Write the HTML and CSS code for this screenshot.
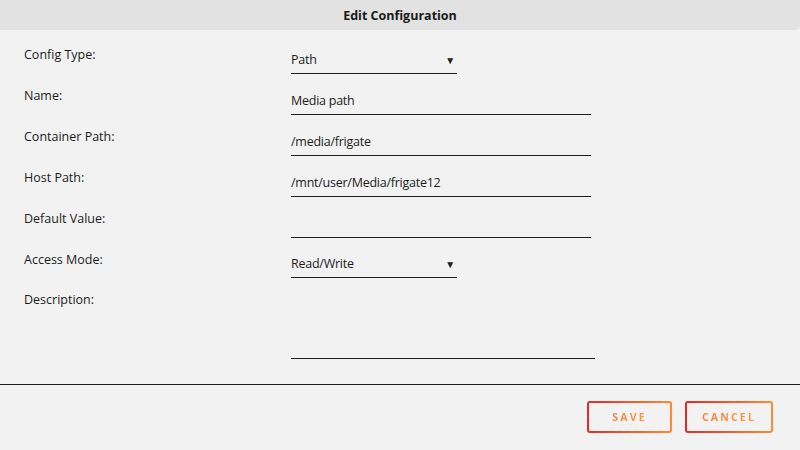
FILE: index.html
```html
<!DOCTYPE html>
<html lang="en">
<head>
<meta charset="utf-8">
<title>Edit Configuration</title>
<link rel="stylesheet" href="styles.css">
</head>
<body>
<div class="dialog">
  <header class="dialog-title">Edit Configuration</header>
  <form class="config-form">
    <div class="row">
      <label class="label">Config Type:</label>
      <div class="field select"><span class="value">Path</span><span class="caret">&#9660;</span></div>
    </div>
    <div class="row">
      <label class="label">Name:</label>
      <div class="field text"><span class="value">Media path</span></div>
    </div>
    <div class="row">
      <label class="label">Container Path:</label>
      <div class="field text"><span class="value">/media/frigate</span></div>
    </div>
    <div class="row">
      <label class="label">Host Path:</label>
      <div class="field text"><span class="value">/mnt/user/Media/frigate12</span></div>
    </div>
    <div class="row">
      <label class="label">Default Value:</label>
      <div class="field text"><span class="value"></span></div>
    </div>
    <div class="row row-short">
      <label class="label">Access Mode:</label>
      <div class="field select"><span class="value">Read/Write</span><span class="caret">&#9660;</span></div>
    </div>
    <div class="row row-desc">
      <label class="label">Description:</label>
      <div class="field area"></div>
    </div>
  </form>
  <footer class="actions">
    <button class="btn btn-save" type="button"><span>SAVE</span></button>
    <button class="btn btn-cancel" type="button"><span>CANCEL</span></button>
  </footer>
</div>
</body>
</html>
```
FILE: styles.css
```css
html, body {
  margin: 0;
  padding: 0;
  background: #f2f2f2;
}

body {
  font-family: "Open Sans", "Noto Sans", sans-serif;
  color: #1c1c1c;
  width: 800px;
  height: 450px;
  overflow: hidden;
}

.dialog-title {
  height: 30px;
  line-height: 32px;
  text-align: center;
  background: #e2e2e2;
  border-bottom-right-radius: 5px;
  font-weight: 700;
  font-size: 12.5px;
  color: #1a1a1a;
}

.config-form {
  padding: 15px 0 0 24px;
  border-bottom: 1px solid #1e1e1e;
  box-sizing: border-box;
  height: 355px;
}

.row {
  display: grid;
  grid-template-columns: 267px 1fr;
  height: 41px;
}

.row-short { height: 40px; }

.label {
  font-size: 12.5px;
  line-height: 20px;
  color: #1c1c1c;
}

.field {
  margin-top: 1px;
  height: 28px;
  box-sizing: border-box;
  border-bottom: 1px solid #1e1e1e;
  font-size: 12.5px;
  letter-spacing: -0.25px;
  line-height: 27px;
  display: flex;
  align-items: center;
  justify-content: space-between;
}

.row-short .field { margin-top: 0; }

.field.text { width: 300px; }

.field.select {
  width: 166px;
  padding-right: 2px;
}

.caret {
  font-size: 10px;
  line-height: 10px;
}

.row-desc { height: auto; }

.field.area {
  width: 304px;
  height: 68px;
}

.actions {
  display: flex;
  justify-content: flex-end;
  gap: 13px;
  padding: 16px 27px 0 0;
}

.btn {
  height: 32px;
  padding: 0;
  border: 2px solid transparent;
  border-radius: 3px;
  background:
    linear-gradient(#f2f2f2, #f2f2f2) padding-box,
    linear-gradient(90deg, #e22a27, #ff8c2f) border-box;
  font-family: "Open Sans", sans-serif;
  font-weight: 700;
  font-size: 10.5px;
  letter-spacing: 2.2px;
  color: #f8843a;
  cursor: pointer;
}

.btn-save { width: 85px; }
.btn-cancel { width: 88px; }

.btn span {
  background: linear-gradient(90deg, #fb7d3a, #ff9a3c);
  -webkit-background-clip: text;
  background-clip: text;
  color: transparent;
}
```
